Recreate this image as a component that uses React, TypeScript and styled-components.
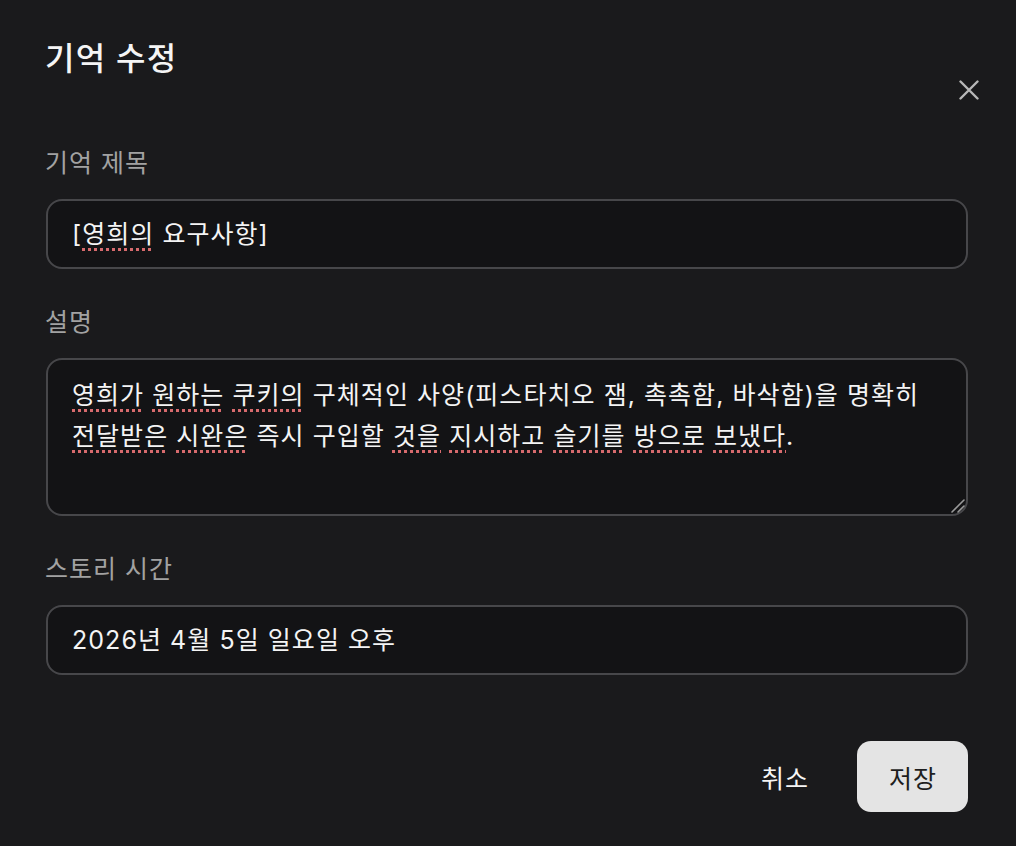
import styled, { createGlobalStyle } from 'styled-components';

const GlobalStyle = createGlobalStyle`
    html, body {
        margin: 0;
        padding: 0;
        background: #1a1a1c;
    }
    body {
        font-family: Inter, "Noto Sans CJK KR", sans-serif;
        color: #f2f2f2;
    }
`;

const SpellWord: React.FC<{ children: React.ReactNode }> = ({ children }) => <Misspelled>{children}</Misspelled>;

const CloseIcon = () => (
    <svg width="20" height="20" viewBox="0 0 20 20" fill="none">
        <path d="M1.5 1.5L18.5 18.5M18.5 1.5L1.5 18.5" stroke="#b8b8b8" strokeWidth="2.4" strokeLinecap="round" />
    </svg>
);

const ResizeGrip = () => (
    <Grip width="15" height="15" viewBox="0 0 15 15" fill="none">
        <path d="M2 14L14 2M8 14L14 8" stroke="#9a9a9a" strokeWidth="1.6" strokeLinecap="round" />
    </Grip>
);

const App: React.FC = () => {
    return (
        <>
            <GlobalStyle />
            <Modal>
                <HeaderRow>
                    <Title>기억 수정</Title>
                    <CloseButton aria-label="닫기">
                        <CloseIcon />
                    </CloseButton>
                </HeaderRow>
                <Form>
                    <FieldGroup>
                        <Label>기억 제목</Label>
                        <Field>
                            [<SpellWord>영희의</SpellWord> 요구사항]
                        </Field>
                    </FieldGroup>
                    <FieldGroup>
                        <Label>설명</Label>
                        <Field multiline>
                            <SpellWord>영희가</SpellWord> <SpellWord>원하는</SpellWord> <SpellWord>쿠키의</SpellWord>{' '}
                            구체적인 사양(피스타치오 잼, 촉촉함, 바삭함)을 명확히 <SpellWord>전달받은</SpellWord>{' '}
                            <SpellWord>시완은</SpellWord> 즉시 구입할 <SpellWord>것을</SpellWord>{' '}
                            <SpellWord>지시하고</SpellWord> <SpellWord>슬기를</SpellWord> <SpellWord>방으로</SpellWord>{' '}
                            <SpellWord>보냈다</SpellWord>.
                            <ResizeGrip />
                        </Field>
                    </FieldGroup>
                    <FieldGroup>
                        <Label>스토리 시간</Label>
                        <Field>2026년 4월 5일 일요일 오후</Field>
                    </FieldGroup>
                </Form>
                <Footer>
                    <CancelButton>취소</CancelButton>
                    <SaveButton>저장</SaveButton>
                </Footer>
            </Modal>
        </>
    );
};

const Modal = styled.div`
    display: flex;
    flex-direction: column;
    box-sizing: border-box;
    width: 1016px;
    height: 846px;
    padding: 38px 48px 0 46px;
    background: #1a1a1c;
`;

const HeaderRow = styled.div`
    display: flex;
    justify-content: space-between;
    align-items: flex-start;
`;

const Title = styled.h2`
    margin: 0 0 0 -1px;
    font-size: 32px;
    line-height: 42px;
    font-weight: 500;
    letter-spacing: 1.2px;
    color: #f5f5f5;
`;

const CloseButton = styled.button`
    display: flex;
    margin: 42px -11px 0 0;
    padding: 0;
    border: none;
    background: transparent;
    cursor: pointer;
`;

const Form = styled.div`
    display: flex;
    flex-direction: column;
    gap: 35px;
    margin-top: 45px;
`;

const FieldGroup = styled.div`
    display: flex;
    flex-direction: column;
    gap: 18px;
`;

const Label = styled.label`
    margin-left: -1px;
    font-size: 25px;
    line-height: 36px;
    letter-spacing: 1px;
    color: #a2a2a2;
`;

const Field = styled.div<{ multiline?: boolean }>`
    position: relative;
    box-sizing: border-box;
    height: ${(props) => (props.multiline ? '158px' : '70px')};
    padding: ${(props) => (props.multiline ? '15px 16px 0 24px' : '0 16px 0 24px')};
    background: #131315;
    border: 2px solid #47474a;
    border-radius: 16px;
    font-size: 25px;
    line-height: ${(props) => (props.multiline ? '41px' : '66px')};
    letter-spacing: 1.05px;
    word-break: keep-all;
    color: #f4f4f4;
`;

const Misspelled = styled.span`
    text-decoration: underline dotted #d76a6d;
    text-decoration-thickness: 2.5px;
    text-underline-offset: 5px;
`;

const Grip = styled.svg`
    position: absolute;
    right: 1px;
    bottom: 1px;
`;

const Footer = styled.div`
    display: flex;
    justify-content: flex-end;
    gap: 17px;
    margin-top: 66px;
`;

const ButtonBase = styled.button`
    box-sizing: border-box;
    width: 111px;
    height: 71px;
    padding: 0 0 0 1px;
    border: none;
    border-radius: 14px;
    font-family: Inter, "Noto Sans CJK KR", sans-serif;
    font-size: 25px;
    letter-spacing: 1px;
    font-weight: 400;
    cursor: pointer;
`;

const CancelButton = styled(ButtonBase)`
    background: transparent;
    color: #f5f5f5;
`;

const SaveButton = styled(ButtonBase)`
    background: #e4e4e4;
    color: #1e1e1e;
`;

export default App;
